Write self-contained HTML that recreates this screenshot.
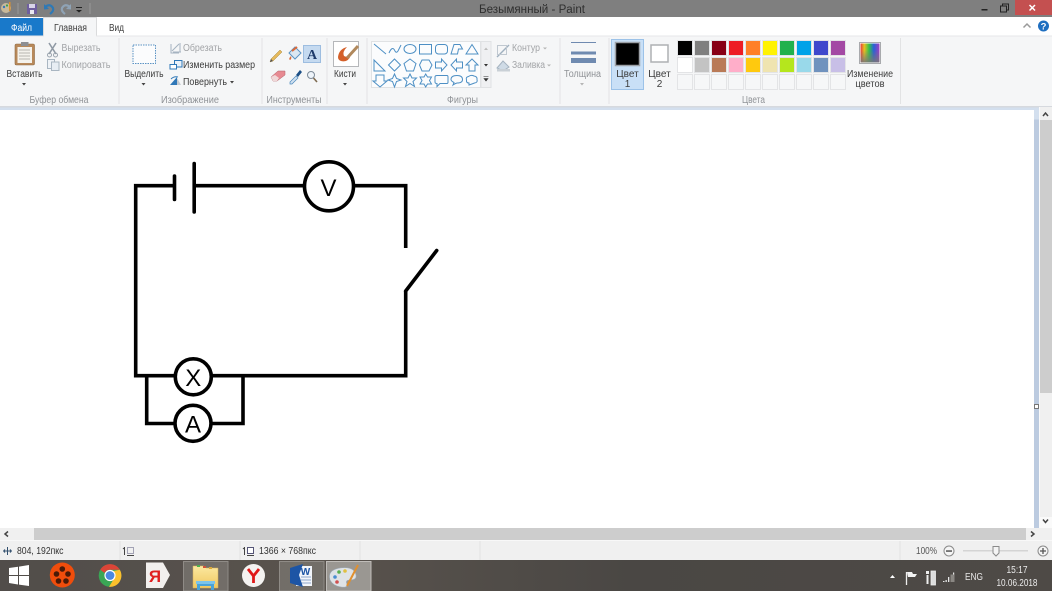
<!DOCTYPE html>
<html><head><meta charset="utf-8"><style>
html,body{margin:0;padding:0;width:1052px;height:591px;overflow:hidden;background:#fff}
svg{display:block;filter:blur(.3px)}
text{font-family:"Liberation Sans",sans-serif;font-size:10px;fill:#444}
.g{fill:#8f9296}
.gl{fill:#a2a4a7}
.b{fill:none;stroke:#4d8fc4;stroke-width:1}
</style></head><body>
<svg width="1052" height="591" viewBox="0 0 1052 591" xmlns="http://www.w3.org/2000/svg">
<defs>
<linearGradient id="tb" x1="0" x2="1" y1="0" y2="0"><stop offset="0" stop-color="#514d4a"/><stop offset=".3" stop-color="#59534d"/><stop offset=".6" stop-color="#4a4744"/><stop offset="1" stop-color="#4e4a46"/></linearGradient>
<linearGradient id="sp" x1="0" x2="1" y1="0" y2="0"><stop offset="0" stop-color="#e53d3d"/><stop offset=".2" stop-color="#e8c020"/><stop offset=".45" stop-color="#35c04a"/><stop offset=".7" stop-color="#2a60d8"/><stop offset="1" stop-color="#a040c0"/></linearGradient>
<linearGradient id="sp2" x1="0" x2="0" y1="0" y2="1"><stop offset=".35" stop-color="#777" stop-opacity="0"/><stop offset="1" stop-color="#777" stop-opacity=".9"/></linearGradient>
<linearGradient id="fold" x1="0" x2="0" y1="0" y2="1"><stop offset="0" stop-color="#fbe8a0"/><stop offset="1" stop-color="#f0c860"/></linearGradient>
</defs>

<!-- title bar -->
<rect width="1052" height="17.5" fill="#7f7f7f"/>
<rect x="0" y="17" width="1052" height="19" fill="#fff"/>
<text x="479" y="13" style="font-size:11.5px;fill:#2f2f2f" textLength="106" lengthAdjust="spacingAndGlyphs">Безымянный - Paint</text>
<circle cx="6" cy="8" r="5" fill="#c9b99a"/><circle cx="4" cy="7" r="1.2" fill="#3a78b8"/><circle cx="7" cy="5.5" r="1.1" fill="#3aa050"/><rect x="9" y="2" width="1.5" height="9" fill="#d89030"/>
<rect x="17.500" y="3" width="1" height="11" fill="#9a9a9a"/>
<rect x="27" y="4" width="10" height="10" fill="#6f5f9e"/><rect x="29" y="4" width="6" height="4" fill="#d8d4e8"/><rect x="30" y="10" width="4" height="4" fill="#e8e8f0"/>
<path d="M45 7 Q50 3 53 8 Q54 11 50 14" fill="none" stroke="#2f79b5" stroke-width="2.200"/><path d="M44 4 L44 9.500 L49 9" fill="#2f79b5"/>
<path d="M70 7 Q65 3 62 8 Q61 11 65 14" fill="none" stroke="#8fa3b5" stroke-width="2.200"/><path d="M71 4 L71 9.500 L66 9" fill="#8fa3b5"/>
<rect x="76" y="7" width="6" height="1" fill="#222"/><path d="M76 10 L82 10 L79 12.500z" fill="#222"/>
<rect x="89.500" y="3" width="1" height="11" fill="#9a9a9a"/>
<!-- window controls -->
<rect x="981.500" y="9" width="6" height="1.500" fill="#222"/>
<rect x="1000.500" y="6" width="6" height="6" fill="none" stroke="#222" stroke-width="1"/><path d="M1002.500 6V4H1008.500V10H1006.500" fill="none" stroke="#222"/>
<rect x="1015" y="0" width="37" height="15" fill="#c45050"/>
<path d="M1029.500 5 L1035 10.500 M1035 5 L1029.500 10.500" stroke="#fff" stroke-width="1.500"/>

<!-- tabs -->
<rect x="0" y="18" width="43" height="18" fill="#1979ca"/>
<text x="11" y="31" style="fill:#fff" textLength="21" lengthAdjust="spacingAndGlyphs">Файл</text>
<rect x="43.500" y="17.500" width="53" height="19" fill="#f5f6f7" stroke="#dadbdc"/>
<rect x="44" y="34" width="52" height="4" fill="#f5f6f7"/>
<text x="54" y="31" style="fill:#3c3c3c" textLength="33" lengthAdjust="spacingAndGlyphs">Главная</text>
<text x="109" y="31" style="fill:#3c3c3c" textLength="15" lengthAdjust="spacingAndGlyphs">Вид</text>
<path d="M1023.500 27.500 L1027 24 L1030.500 27.500" fill="none" stroke="#9a9a9a" stroke-width="1.500"/>
<circle cx="1043.500" cy="26" r="5.500" fill="#1f6fc0"/><text x="1043.500" y="29.500" text-anchor="middle" style="font-size:9.500px;font-weight:bold;fill:#fff">?</text>

<!-- ribbon -->
<rect x="0" y="36" width="1052" height="70" fill="#f5f6f7"/>
<rect x="0" y="35.500" width="1052" height="1" fill="#e6e7e8"/>
<rect x="44" y="35" width="52" height="2" fill="#f5f6f7"/>
<rect x="0" y="106" width="1052" height="1.500" fill="#d6d9de"/>
<rect x="0" y="107.500" width="1034" height="2.500" fill="#d3dfee"/>
<rect x="118.500" y="38" width="1" height="66" fill="#e2e3e4"/>
<rect x="261.500" y="38" width="1" height="66" fill="#e2e3e4"/>
<rect x="326.500" y="38" width="1" height="66" fill="#e2e3e4"/>
<rect x="366.500" y="38" width="1" height="66" fill="#e2e3e4"/>
<rect x="559.500" y="38" width="1" height="66" fill="#e2e3e4"/>
<rect x="608.500" y="38" width="1" height="66" fill="#e2e3e4"/>
<rect x="900" y="38" width="1" height="66" fill="#e2e3e4"/>

<!-- group labels -->
<text x="29.500" y="103" class="g" textLength="59" lengthAdjust="spacingAndGlyphs">Буфер обмена</text>
<text x="161" y="103" class="g" textLength="58" lengthAdjust="spacingAndGlyphs">Изображение</text>
<text x="266.500" y="103" class="g" textLength="55" lengthAdjust="spacingAndGlyphs">Инструменты</text>
<text x="447" y="103" class="g" textLength="31" lengthAdjust="spacingAndGlyphs">Фигуры</text>
<text x="742" y="103" class="g" textLength="23" lengthAdjust="spacingAndGlyphs">Цвета</text>

<!-- clipboard -->
<rect x="15" y="44" width="19.500" height="21" rx="1.500" fill="#b8895a" stroke="#8e6a44" stroke-width=".6"/>
<rect x="17.500" y="47" width="14.500" height="16" fill="#f4f2ec"/>
<path d="M19 50H30M19 53H30M19 56H30M19 59H30" stroke="#b7b7b0"/>
<rect x="21" y="42" width="7.500" height="4" fill="#8d8f92"/>
<text x="6.500" y="77" style="fill:#3c3c3c" textLength="36" lengthAdjust="spacingAndGlyphs">Вставить</text>
<path d="M22 83H26L24 85.500z" fill="#444"/>
<path d="M49 43 L56 54 M56 43 L49 54" stroke="#909aa5" stroke-width="1.600"/><circle cx="49.500" cy="55" r="2" fill="none" stroke="#9aa4ae"/><circle cx="55.500" cy="55" r="2" fill="none" stroke="#9aa4ae"/>
<text x="61.500" y="51" class="gl" textLength="39" lengthAdjust="spacingAndGlyphs">Вырезать</text>
<rect x="47.500" y="59.500" width="7" height="9" fill="#eef2f6" stroke="#a9b6c2"/><rect x="51.500" y="62" width="7.500" height="8.500" fill="#e7edf3" stroke="#a9b6c2"/>
<text x="61.500" y="68" class="gl" textLength="49" lengthAdjust="spacingAndGlyphs">Копировать</text>

<!-- select -->
<rect x="133" y="45" width="22.500" height="18.500" fill="#fbfcfd" stroke="#5b93c4" stroke-dasharray="1.500 1"/>
<text x="124.500" y="77" style="fill:#3c3c3c" textLength="39" lengthAdjust="spacingAndGlyphs">Выделить</text>
<path d="M141.500 83H145.500L143.500 85.500z" fill="#444"/>
<path d="M171 44V53H179M173 52H181M180 43V52M172 51L179 44" fill="none" stroke="#a5b3c0"/>
<text x="183" y="51" class="gl" textLength="39" lengthAdjust="spacingAndGlyphs">Обрезать</text>
<rect x="174.500" y="60.500" width="7.500" height="6.500" fill="#eaf2fa" stroke="#2f78b8"/><rect x="170" y="64.500" width="6.500" height="4.500" fill="#fff" stroke="#2f78b8"/>
<text x="183" y="68" style="fill:#3c3c3c" textLength="72" lengthAdjust="spacingAndGlyphs">Изменить размер</text>
<path d="M170 85L177 77V85z" fill="#2f78b8"/><path d="M177 78L181 85H177z" fill="#c4cad0"/><path d="M171 79Q174 76 178 77" fill="none" stroke="#2f78b8"/>
<text x="183" y="85" style="fill:#3c3c3c" textLength="44" lengthAdjust="spacingAndGlyphs">Повернуть</text>
<path d="M230 81H234L232 83.500z" fill="#444"/>

<!-- tools -->
<rect x="303.500" y="45.500" width="17" height="17" fill="#c5daf0" stroke="#9dbde0"/>
<text x="312" y="59" text-anchor="middle" style="font-family:'Liberation Serif',serif;font-size:14px;font-weight:bold;fill:#1f3b6a">A</text>
<path d="M271 59 L280 50 L282 52 L273 61 L270 62z" fill="#e5b95c" stroke="#a88840" stroke-width=".5"/><path d="M270 62L271 59L273 61z" fill="#555"/>
<path d="M289 53L295 47L301 53L295 59z" fill="#dbe7f2" stroke="#5a93c4"/><path d="M291 56Q288 59 290 60Q292 59 291 56" fill="#d96a3a"/><path d="M292 51L297 47" stroke="#d96a3a" stroke-width="2"/>
<path d="M271 77L278 71L285 71L285 75L277 81L273 81z" fill="#e78a92" stroke="#b06068" stroke-width=".5"/><path d="M271 77L273 81L277 81L279 78L275 75z" fill="#f0d8d8"/>
<path d="M290 82L296 76L298 78L292 84L290 84z" fill="#cfe0f0" stroke="#4c88bc" stroke-width=".7"/><path d="M296 75L300 70L302 72L298 77z" fill="#1c4f86"/>
<circle cx="311" cy="75" r="3.500" fill="#eef4fa" stroke="#7d8b99"/><path d="M313.500 78L317 82" stroke="#7d6a50" stroke-width="1.600"/>

<!-- brushes -->
<rect x="333.500" y="41.500" width="25" height="25" fill="#fff" stroke="#b5b7ba"/>
<path d="M338 57Q339 49 347 47Q342 52 344 56Q348 58 351 55Q348 63 341 61Q338 60 338 57z" fill="#d4602a"/>
<path d="M347 58L358 46" stroke="#b0885c" stroke-width="3"/>
<text x="334" y="77" style="fill:#3c3c3c" textLength="22" lengthAdjust="spacingAndGlyphs">Кисти</text>
<path d="M343 83H347L345 85.500z" fill="#444"/>

<!-- shapes gallery -->
<rect x="371.500" y="41.500" width="109" height="46" fill="#fbfcfd" stroke="#e0e2e4"/>
<rect x="481" y="41.500" width="10" height="46" fill="#eff0f2" stroke="#e0e2e4"/>
<path d="M484 50H488L486 47.500z" fill="#bdbdbd"/><path d="M484 64H488L486 66.500z" fill="#333"/><path d="M483.500 76.500H488.500M484 78.500H488L486 81z" stroke="#333" stroke-width=".6" fill="#333"/>
<g class="b">
<path d="M374 44L386 54"/>
<path d="M389 53Q392 46 394.500 50Q396 54 398 51Q400 47 401 45"/>
<ellipse cx="410" cy="49" rx="6" ry="4.500"/>
<rect x="419.500" y="44.500" width="12" height="9.500"/>
<rect x="435.500" y="44.500" width="12" height="9.500" rx="3"/>
<path d="M451 54L454 44.500H460L462.500 49H458.500L457.500 54z"/>
<path d="M466 54L472 44.500L478 54z"/>
<path d="M374 60V71H385z"/>
<path d="M394.500 59L400.500 65L394.500 71L388.500 65z"/>
<path d="M410 59L416 63.500L413.500 71H406.500L404 63.500z"/>
<path d="M422 60H429L432 65L429 71H422L419.500 65z"/>
<path d="M435.500 62H441.500V59L447 65L441.500 71V68H435.500z"/>
<path d="M462.500 62H456.500V59L451 65L456.500 71V68H462.500z"/>
<path d="M472 59L478 65H475V71H469V65H466z"/>
<path d="M376 75H384V81H387L380 87L373 81H376z"/>
<path d="M394.500 74L396.500 78.500L401 80L396.500 81.500L394.500 87L392.500 81.500L388 80L392.500 78.500z"/>
<path d="M410 74L412 78H416.500L413 81.500L414.500 86.500L410 83.500L405.500 86.500L407 81.500L403.500 78H408z"/>
<path d="M425.700 74L427.500 77H431.500L429.500 80.500L431.500 84H427.500L425.700 87L424 84H420L422 80.500L420 77H424z"/>
<path d="M437 75.500H447Q448 75.500 448 77V82Q448 83.500 447 83.500H440L437 86.500V83.500Q435 83.500 435 82V77Q435 75.500 437 75.500z"/>
<path d="M453 85L454 82.500Q451 81 451 79.500Q451 75.500 457 75.500Q462.500 75.500 462.500 79.500Q462.500 83 457 83Q455 83.500 453 85z"/>
<path d="M469 85V83Q466 83 466.500 80Q465.500 77 468.500 76.500Q471 74.500 474 76Q477.500 76.500 477 79.500Q478 82.500 474.500 83Q472 84 469 85z"/>
</g>
<path d="M497 57L509 45" stroke="#9fb0bf" stroke-width="1.400"/><rect x="497.500" y="45.500" width="9" height="9" fill="none" stroke="#c0c8d0"/>
<text x="512" y="51" class="gl" textLength="28" lengthAdjust="spacingAndGlyphs">Контур</text>
<path d="M543 47.500H547L545 49.500z" fill="#b5b5b5"/>
<path d="M497 68L503 61L509 67L503 71z" fill="#cfdbe6" stroke="#a5b3c0"/><rect x="497" y="69" width="13" height="2.500" fill="#c9d0d6"/>
<text x="512" y="68" class="gl" textLength="33" lengthAdjust="spacingAndGlyphs">Заливка</text>
<path d="M547 64.500H551L549 66.500z" fill="#b5b5b5"/>

<!-- thickness -->
<rect x="571" y="42" width="25" height="1" fill="#6f8ab0"/>
<rect x="571" y="51.500" width="25" height="3" fill="#6f8ab0"/>
<rect x="571" y="58" width="25" height="5" fill="#6f8ab0"/>
<text x="564" y="77" class="g" textLength="37" lengthAdjust="spacingAndGlyphs">Толщина</text>
<path d="M580 83H584L582 85.500z" fill="#b5b5b5"/>

<!-- color 1/2 -->
<rect x="611.500" y="39.500" width="32" height="50" fill="#c9e0f7" stroke="#9cc2e8"/>
<rect x="615.500" y="42.500" width="24" height="23" fill="#000" stroke="#9ca0a6" stroke-width="1.500"/>
<text x="627.500" y="77" text-anchor="middle" style="fill:#3c3c3c">Цвет</text>
<text x="627.500" y="87" text-anchor="middle" style="fill:#3c3c3c">1</text>
<rect x="651" y="45" width="17" height="17" fill="#fff" stroke="#aeb0b3" stroke-width="1.500"/>
<text x="659.500" y="77" text-anchor="middle" style="fill:#3c3c3c">Цвет</text>
<text x="659.500" y="87" text-anchor="middle" style="fill:#3c3c3c">2</text>

<!-- palette -->
<g stroke="#e3e4e6">
<rect x="677.500" y="40.500" width="15" height="15" fill="#fff"/><rect x="694.500" y="40.500" width="15" height="15" fill="#fff"/><rect x="711.500" y="40.500" width="15" height="15" fill="#fff"/><rect x="728.500" y="40.500" width="15" height="15" fill="#fff"/><rect x="745.500" y="40.500" width="15" height="15" fill="#fff"/><rect x="762.500" y="40.500" width="15" height="15" fill="#fff"/><rect x="779.500" y="40.500" width="15" height="15" fill="#fff"/><rect x="796.500" y="40.500" width="15" height="15" fill="#fff"/><rect x="813.500" y="40.500" width="15" height="15" fill="#fff"/><rect x="830.500" y="40.500" width="15" height="15" fill="#fff"/>
<rect x="677.500" y="57.500" width="15" height="15" fill="#fff"/><rect x="694.500" y="57.500" width="15" height="15" fill="#fff"/><rect x="711.500" y="57.500" width="15" height="15" fill="#fff"/><rect x="728.500" y="57.500" width="15" height="15" fill="#fff"/><rect x="745.500" y="57.500" width="15" height="15" fill="#fff"/><rect x="762.500" y="57.500" width="15" height="15" fill="#fff"/><rect x="779.500" y="57.500" width="15" height="15" fill="#fff"/><rect x="796.500" y="57.500" width="15" height="15" fill="#fff"/><rect x="813.500" y="57.500" width="15" height="15" fill="#fff"/><rect x="830.500" y="57.500" width="15" height="15" fill="#fff"/>
<rect x="677.500" y="74.500" width="15" height="15" fill="#f6f7f8"/><rect x="694.500" y="74.500" width="15" height="15" fill="#f6f7f8"/><rect x="711.500" y="74.500" width="15" height="15" fill="#f6f7f8"/><rect x="728.500" y="74.500" width="15" height="15" fill="#f6f7f8"/><rect x="745.500" y="74.500" width="15" height="15" fill="#f6f7f8"/><rect x="762.500" y="74.500" width="15" height="15" fill="#f6f7f8"/><rect x="779.500" y="74.500" width="15" height="15" fill="#f6f7f8"/><rect x="796.500" y="74.500" width="15" height="15" fill="#f6f7f8"/><rect x="813.500" y="74.500" width="15" height="15" fill="#f6f7f8"/><rect x="830.500" y="74.500" width="15" height="15" fill="#f6f7f8"/>
</g>
<rect x="678" y="41" width="14" height="14" fill="#000"/><rect x="695" y="41" width="14" height="14" fill="#7f7f7f"/><rect x="712" y="41" width="14" height="14" fill="#880015"/><rect x="729" y="41" width="14" height="14" fill="#ed1c24"/><rect x="746" y="41" width="14" height="14" fill="#ff7f27"/><rect x="763" y="41" width="14" height="14" fill="#fff200"/><rect x="780" y="41" width="14" height="14" fill="#22b14c"/><rect x="797" y="41" width="14" height="14" fill="#00a2e8"/><rect x="814" y="41" width="14" height="14" fill="#3f48cc"/><rect x="831" y="41" width="14" height="14" fill="#a349a4"/>
<rect x="678" y="58" width="14" height="14" fill="#fff"/><rect x="695" y="58" width="14" height="14" fill="#c3c3c3"/><rect x="712" y="58" width="14" height="14" fill="#b97a57"/><rect x="729" y="58" width="14" height="14" fill="#ffaec9"/><rect x="746" y="58" width="14" height="14" fill="#ffc90e"/><rect x="763" y="58" width="14" height="14" fill="#efe4b0"/><rect x="780" y="58" width="14" height="14" fill="#b5e61d"/><rect x="797" y="58" width="14" height="14" fill="#99d9ea"/><rect x="814" y="58" width="14" height="14" fill="#7092be"/><rect x="831" y="58" width="14" height="14" fill="#c8bfe7"/>

<!-- edit colors -->
<rect x="859.500" y="42.500" width="21" height="21" fill="#fff" stroke="#a8aaad"/>
<rect x="860.500" y="43.500" width="19" height="19" fill="url(#sp)"/>
<rect x="860.500" y="43.500" width="19" height="19" fill="url(#sp2)"/>
<text x="870" y="77" text-anchor="middle" style="fill:#3c3c3c" textLength="46" lengthAdjust="spacingAndGlyphs">Изменение</text>
<text x="870" y="87" text-anchor="middle" style="fill:#3c3c3c" textLength="29" lengthAdjust="spacingAndGlyphs">цветов</text>

<!-- canvas chrome -->
<rect x="1034" y="107.500" width="5" height="421" fill="#bccbe0"/>
<rect x="1034" y="107.500" width="5" height="12" fill="#d3dfee"/>
<rect x="1039" y="107" width="13" height="433" fill="#fafafa"/>
<rect x="1040" y="107" width="12" height="13" fill="#f0f0f0"/>
<rect x="1040" y="120" width="12" height="273" fill="#cdcdcd"/>
<rect x="1040" y="393" width="12" height="124" fill="#f0f0f0"/>
<path d="M1043 116L1045.500 113L1048 116" fill="none" stroke="#444" stroke-width="1.500"/>
<path d="M1043 519.500L1045.500 522.500L1048 519.500" fill="none" stroke="#444" stroke-width="1.500"/>
<rect x="1034.500" y="404.500" width="4" height="4" fill="#fff" stroke="#777"/>

<!-- circuit -->
<g fill="none" stroke="#000" stroke-width="3.600">
<path d="M174.500 185.700H135.700V375.700H405.700V291"/>
<path d="M174.500 176V199.500" stroke-linecap="round"/>
<path d="M194.200 163.500V212" stroke-linecap="round"/>
<path d="M194.200 185.700H304M354 185.700H405.700V248"/>
<path d="M405.700 291L436.700 250.500" stroke-linecap="round"/>
<path d="M146.700 376V423.500H175M211 423.500H243V376"/>
<circle cx="329" cy="186.300" r="24.500" fill="#fff"/>
<circle cx="193.300" cy="376.800" r="18" fill="#fff"/>
<circle cx="193" cy="423.300" r="18" fill="#fff"/>
</g>
<text x="328.500" y="196" text-anchor="middle" style="font-size:24px;fill:#000">V</text>
<text x="193.300" y="386" text-anchor="middle" style="font-size:24px;fill:#000">X</text>
<text x="193" y="432.500" text-anchor="middle" style="font-size:24px;fill:#000">A</text>

<!-- h scrollbar -->
<rect x="0" y="528" width="1039" height="12" fill="#f0f0f0"/>
<rect x="34" y="528" width="992" height="12" fill="#cdcdcd"/>
<path d="M8 531.500L5 534L8 536.500" fill="none" stroke="#444" stroke-width="1.500"/>
<path d="M1031 531.500L1034 534L1031 536.500" fill="none" stroke="#444" stroke-width="1.500"/>
<rect x="1039" y="528" width="13" height="12" fill="#f0f0f0"/>

<!-- status bar -->
<rect x="0" y="540" width="1052" height="20" fill="#f0f0f0"/>
<rect x="0" y="540" width="1052" height="1" fill="#f8f8f8"/>
<rect x="119.500" y="541" width="1" height="19" fill="#e2e2e2"/>
<rect x="239.500" y="541" width="1" height="19" fill="#e2e2e2"/>
<rect x="359.500" y="541" width="1" height="19" fill="#e2e2e2"/>
<rect x="479.500" y="541" width="1" height="19" fill="#e2e2e2"/>
<rect x="899.500" y="541" width="1" height="19" fill="#e2e2e2"/>
<path d="M7.500 551H3.500M3.500 551L5 549.500M3.500 551L5 552.500M7.500 551H11.500M11.500 551L10 549.500M11.500 551L10 552.500M7.500 547V555" fill="none" stroke="#33506e"/>
<text x="17" y="554" style="fill:#333" textLength="46.500" lengthAdjust="spacingAndGlyphs">804, 192пкс</text>
<path d="M124.500 547V555M124 548L123 549" stroke="#444" fill="none"/><rect x="127.500" y="547.500" width="6" height="6" fill="none" stroke="#557" stroke-dasharray="1 1"/><path d="M127 555.500H134" stroke="#444"/>
<path d="M244.500 547V555M244 548L243 549" stroke="#444" fill="none"/><rect x="247.500" y="547.500" width="6" height="6" fill="#fff" stroke="#557"/><path d="M247 555.500H254" stroke="#444"/>
<text x="259" y="554" style="fill:#333" textLength="57" lengthAdjust="spacingAndGlyphs">1366 × 768пкс</text>
<text x="916" y="554" style="fill:#555" textLength="21" lengthAdjust="spacingAndGlyphs">100%</text>
<circle cx="949" cy="551" r="5" fill="#f5f5f5" stroke="#8a8a8a"/><rect x="946" y="550.300" width="6" height="1.500" fill="#555"/>
<rect x="963" y="550" width="65" height="1.500" fill="#d4d4d4"/>
<path d="M993 546.500H999V553L996 556L993 553z" fill="#f4f4f4" stroke="#8a8a8a"/>
<circle cx="1043" cy="551" r="5" fill="#f5f5f5" stroke="#8a8a8a"/><path d="M1040 551H1046M1043 548V554" stroke="#555" stroke-width="1.300"/>

<!-- taskbar -->
<rect x="0" y="560" width="1052" height="31" fill="url(#tb)"/>
<rect x="183.500" y="561.500" width="44.500" height="29.500" fill="#7b7772" fill-opacity=".75" stroke="#8f8b86"/>
<rect x="279.500" y="561.500" width="44.500" height="29.500" fill="#7b7772" fill-opacity=".75" stroke="#8f8b86"/>
<rect x="326.500" y="561.500" width="44.500" height="29.500" fill="#9a9792" stroke="#c0bdb9"/>
<!-- windows -->
<path d="M9 568L18 566.800V575H9zM19 566.600L29 565V575H19zM9 576H18V584.500L9 583zM19 576H29V586L19 584.600z" fill="#fff"/>
<!-- film -->
<circle cx="62.300" cy="575" r="12.500" fill="#f04d0c"/>
<g fill="#4a1a08"><circle cx="62.300" cy="569" r="2.800"/><circle cx="56.500" cy="574" r="2.800"/><circle cx="68" cy="574" r="2.800"/><circle cx="58.500" cy="581" r="2.800"/><circle cx="66" cy="581" r="2.800"/></g>
<!-- chrome -->
<circle cx="110" cy="575.500" r="11.300" fill="#3aa655"/>
<path d="M100.300 569.700A11.300 11.300 0 0 1 119.800 569.700H110A6 6 0 0 0 104.500 573z" fill="#dc4437"/>
<path d="M119.800 569.700A11.300 11.300 0 0 1 109 586.800L115 577A6 6 0 0 0 113.500 571z" fill="#fbc02d"/>
<circle cx="110" cy="575.500" r="5.600" fill="#fff"/><circle cx="110" cy="575.500" r="4.400" fill="#4a88e0"/>
<!-- yandex tag -->
<path d="M146 562.500H163L170 575L163 588H146z" fill="#f2f0ee"/>
<text x="155" y="582" text-anchor="middle" style="font-size:17px;font-weight:bold;fill:#e02020;font-family:'Liberation Sans','Noto Sans CJK SC',sans-serif">Я</text>
<!-- explorer -->
<path d="M193 566H204L206 568H218V588H193z" fill="url(#fold)" stroke="#d6ae58" stroke-width=".5"/>
<rect x="197" y="565" width="3" height="2" fill="#4caf50"/><rect x="203" y="566" width="3" height="2" fill="#d0533a"/><rect x="209" y="567" width="3" height="2" fill="#d8a83a"/>
<path d="M197 590V583H214V590H211V586H200V590z" fill="#4aa3d8"/><rect x="196" y="581" width="19" height="3" fill="#7cc4ea"/>
<!-- Y browser -->
<circle cx="253.500" cy="575.500" r="11.500" fill="#f4f2f0"/>
<path d="M248 569L253.500 576L259 569M253.500 576V583" fill="none" stroke="#e01818" stroke-width="2.800"/>
<!-- word -->
<rect x="296" y="566" width="16" height="20" fill="#f2f5fa"/>
<path d="M301 577H311M301 580H311M301 583H311" stroke="#8fa8cc"/>
<path d="M290 568Q296 566 303 564L299 575L303 587Q296 585 290 583z" fill="#1d55a5"/>
<text x="305.500" y="575" style="font-size:10px;font-weight:bold;fill:#1d55a5" text-anchor="middle">W</text>
<!-- paint -->
<path d="M330 580Q327 570 340 568Q354 566 356 575Q357 580 350 580Q345 580 347 584Q348 588 341 587Q333 586 330 580z" fill="#dfe3e6" stroke="#9aa8b4" stroke-width=".6"/>
<circle cx="335" cy="577" r="1.800" fill="#4a8ed0"/><circle cx="339" cy="572" r="1.800" fill="#58b050"/><circle cx="345" cy="571" r="1.800" fill="#e0c040"/><circle cx="337" cy="582" r="1.800" fill="#d05050"/>
<path d="M347 586L358 565" stroke="#e09030" stroke-width="2"/>

<!-- tray -->
<path d="M890 578H895L892.500 575z" fill="#fff"/>
<path d="M906.500 572V585" stroke="#eee" stroke-width="1.300"/><path d="M907 572H912L913 574H917L915 577H908z" fill="#f2f2f2"/>
<rect x="931" y="571" width="4.500" height="14" fill="#ddd" stroke="#eee" stroke-width=".8"/><rect x="926" y="571" width="3" height="3" fill="#eee"/><rect x="926.500" y="575" width="2" height="9" fill="#eee"/>
<path d="M943 581H944.500V582H943zM945.500 580H946.800V582H945.500zM948 577H949.300V582H948zM950.500 574.500H951.800V582H950.500zM953 572.500H954.200V582H953z" fill="#e8e8e8"/>
<rect x="950.500" y="574.500" width="3.700" height="7.500" fill="#8a8783"/>
<text x="965" y="580" style="fill:#e8e8e8" textLength="18" lengthAdjust="spacingAndGlyphs">ENG</text>
<text x="1017" y="573" text-anchor="middle" style="fill:#ececec" textLength="21" lengthAdjust="spacingAndGlyphs">15:17</text>
<text x="1017" y="586" text-anchor="middle" style="fill:#ececec" textLength="41" lengthAdjust="spacingAndGlyphs">10.06.2018</text>
</svg>
</body></html>
